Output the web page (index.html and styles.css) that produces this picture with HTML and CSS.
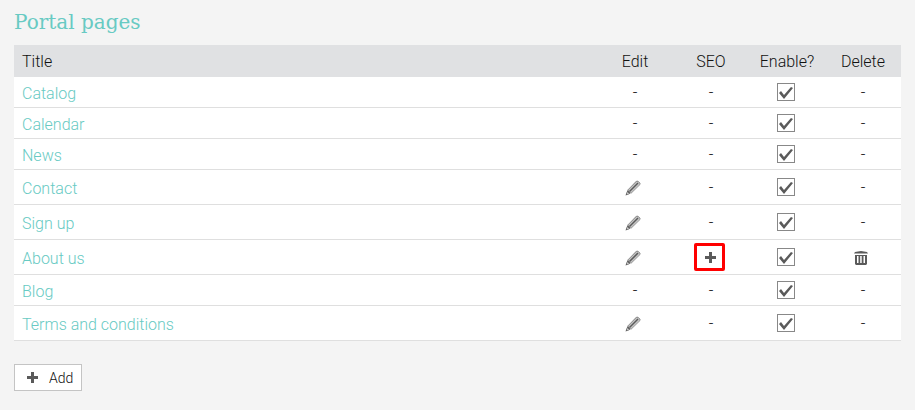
FILE: index.html
```html
<!DOCTYPE html>
<html lang="en">

<head>
    <meta charset="UTF-8">
    <meta name="viewport" content="width=device-width, initial-scale=1.0">
    <title>Portal pages</title>
    <link rel="stylesheet" href="styles.css">
</head>

<body>

    <svg class="sprite" aria-hidden="true">
        <symbol id="pencil" viewBox="0 0 16 16">
            <path fill="#c4c4c4" d="M11 1h2l2 2v1L6 13l-3-3z" />
            <path fill="none" stroke="#777" stroke-width=".8" d="M2.800 10L11.500 1.200h1.500L15 3.200v1.300L6 13.300" />
            <path fill="none" stroke="#5a5a5a" stroke-width="1.500" d="M4.500 11.500L13 3" />
            <path fill="#666" d="M2.800 9.800L6 13l-2.500 1.500L.500 15.500l1-3z" />
            <path fill="#ddd" d="M2.200 12l1.800 1.800-1.800.4z" />
        </symbol>
        <symbol id="plus" viewBox="0 0 16 16">
            <path fill="#5a5a5a" d="M8 2h3v4h4v3h-4v4H8V9H4V6h4z" />
        </symbol>
        <symbol id="trash" viewBox="0 0 16 16">
            <path fill="#5a5a5a" d="M5 1.500q3-1 6 0l3 .5 1 1.500H1L2 2z" />
            <path fill="#5a5a5a" fill-rule="evenodd" d="M2 5h12v9l-1 1H3l-1-1zM4 6v7h1.500V6zM7.200 6v7h1.500V6zM10.500 6v7H12V6z" />
        </symbol>
    </svg>

    <h1>Portal pages</h1>

    <table class="pages">
        <thead>
            <tr>
                <th class="title">Title</th>
                <th>Edit</th>
                <th>SEO</th>
                <th>Enable?</th>
                <th>Delete</th>
            </tr>
        </thead>
        <tbody>
            <tr>
                <td class="title"><a href="#">Catalog</a></td>
                <td>-</td>
                <td>-</td>
                <td><input type="checkbox" aria-label="Enable Catalog" checked></td>
                <td>-</td>
            </tr>
            <tr>
                <td class="title"><a href="#">Calendar</a></td>
                <td>-</td>
                <td>-</td>
                <td><input type="checkbox" aria-label="Enable Calendar" checked></td>
                <td>-</td>
            </tr>
            <tr>
                <td class="title"><a href="#">News</a></td>
                <td>-</td>
                <td>-</td>
                <td><input type="checkbox" aria-label="Enable News" checked></td>
                <td>-</td>
            </tr>
            <tr>
                <td class="title"><a href="#">Contact</a></td>
                <td><button class="icon-btn" aria-label="Edit Contact"><svg><use href="#pencil" /></svg></button></td>
                <td>-</td>
                <td><input type="checkbox" aria-label="Enable Contact" checked></td>
                <td>-</td>
            </tr>
            <tr>
                <td class="title"><a href="#">Sign up</a></td>
                <td><button class="icon-btn" aria-label="Edit Sign up"><svg><use href="#pencil" /></svg></button></td>
                <td>-</td>
                <td><input type="checkbox" aria-label="Enable Sign up" checked></td>
                <td>-</td>
            </tr>
            <tr>
                <td class="title"><a href="#">About us</a></td>
                <td><button class="icon-btn" aria-label="Edit About us"><svg><use href="#pencil" /></svg></button></td>
                <td><button class="icon-btn marked" aria-label="Add SEO for About us"><svg><use href="#plus" /></svg></button></td>
                <td><input type="checkbox" aria-label="Enable About us" checked></td>
                <td><button class="icon-btn" aria-label="Delete About us"><svg><use href="#trash" /></svg></button></td>
            </tr>
            <tr>
                <td class="title"><a href="#">Blog</a></td>
                <td>-</td>
                <td>-</td>
                <td><input type="checkbox" aria-label="Enable Blog" checked></td>
                <td>-</td>
            </tr>
            <tr>
                <td class="title"><a href="#">Terms and conditions</a></td>
                <td><button class="icon-btn" aria-label="Edit Terms and conditions"><svg><use href="#pencil" /></svg></button></td>
                <td>-</td>
                <td><input type="checkbox" aria-label="Enable Terms and conditions" checked></td>
                <td>-</td>
            </tr>
        </tbody>
    </table>

    <button class="add-btn"><svg><use href="#plus" /></svg>Add</button>

</body>

</html>
```
FILE: styles.css
```css
body {
    margin: 0;
    padding: 8px 14px;
    background: #f4f4f4;
    color: #111;
    font-family: Roboto, sans-serif;
    font-size: 16px;
    font-weight: 300;
    line-height: 20px;
}

.sprite {
    display: none;
}

h1 {
    margin: 0 0 9px;
    color: #68cac3;
    font-family: "Roboto Slab", "DejaVu Serif", serif;
    font-size: 20px;
    font-weight: 400;
    line-height: 28px;
}

.pages {
    width: 100%;
    table-layout: fixed;
    border-collapse: separate;
    border-spacing: 0;
    background: white;
}

th,
td {
    width: 76px;
    padding: 6px 0 4px;
    text-align: center;
    vertical-align: middle;
}

th {
    padding: 7px 0 5px;
    background: #e0e1e3;
    font-weight: 300;
}

td {
    border-bottom: 1px solid #dfdfdf;
}

.title {
    width: auto;
    padding-left: 8px;
    text-align: left;
}

td.title {
    padding-top: 7px;
    padding-bottom: 3px;
}

a {
    color: #68cac3;
    text-decoration: none;
}

input[type="checkbox"] {
    appearance: none;
    display: block;
    box-sizing: border-box;
    width: 18px;
    height: 18px;
    margin: 0 28px 2px;
    border: 1px solid #888;
    background: white;
}

input[type="checkbox"]:checked::before {
    content: "";
    display: block;
    height: 16px;
    background: #5a5a5a;
    clip-path: polygon(1px 9px, 3px 7px, 6px 11px, 13px 3px, 15px 4px, 6px 15px);
}

.icon-btn {
    display: block;
    position: relative;
    width: 24px;
    height: 24px;
    margin: 0 24px;
    padding: 4px;
    border: none;
    background: none;
    cursor: pointer;
}

svg {
    display: block;
    width: 16px;
    height: 16px;
}

.marked::after {
    content: "";
    position: absolute;
    inset: -3px -4px -1px -3px;
    border: 3px solid #f00;
    border-radius: 2px;
}

.add-btn {
    display: flex;
    align-items: center;
    gap: 10px;
    margin-top: 23px;
    padding: 3px 8px 2px;
    border: 1px solid #c4c4c4;
    background: white;
    color: #111;
    font: inherit;
    font-size: 14px;
    line-height: 20px;
    cursor: pointer;
}
```
